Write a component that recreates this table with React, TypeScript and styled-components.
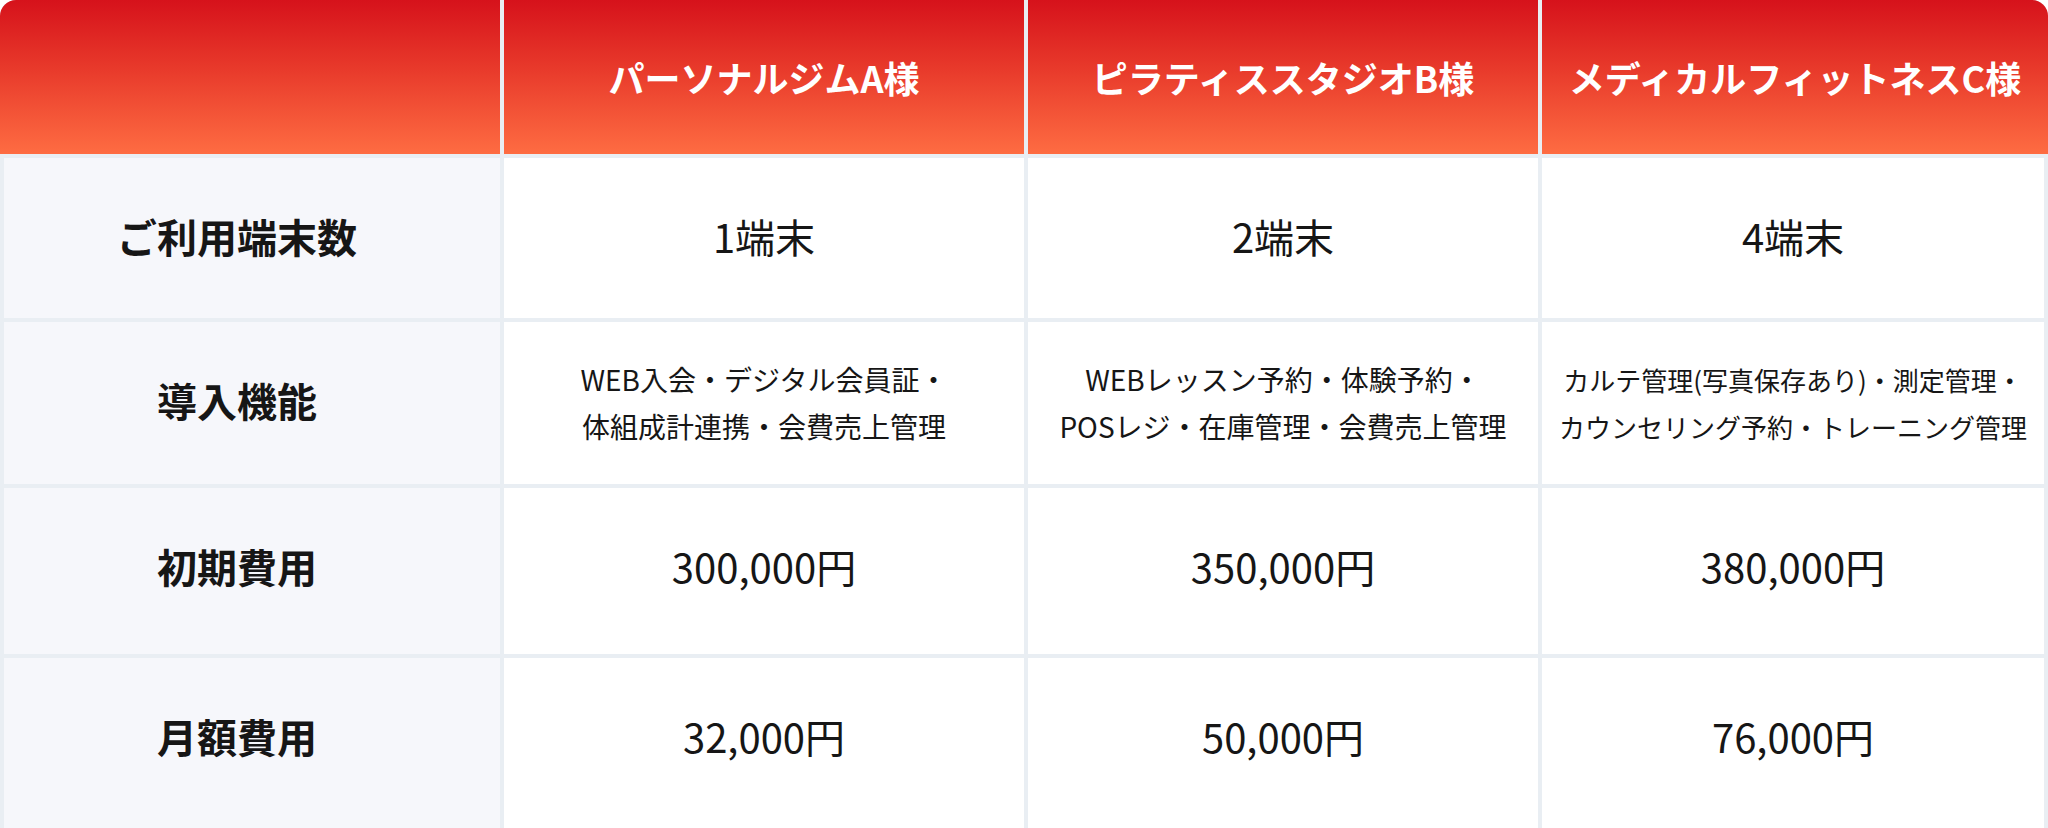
import styled, { createGlobalStyle } from "styled-components";

const GlobalStyle = createGlobalStyle`
  html, body {
    margin: 0;
    padding: 0;
    background: #ffffff;
  }

  body {
    font-family: "Noto Sans CJK JP", "Noto Sans", sans-serif;
    color: #161616;
  }
`;

const Table = styled.div`
  display: flex;
  flex-direction: column;
  gap: 4px;
  width: 2048px;
  background-color: #e9eef3;
  border-radius: 16px 16px 0 0;
  overflow: hidden;
`;

const HeadRow = styled.div`
  display: grid;
  grid-template-columns: 500px 520px 510px 506px;
  gap: 4px;
  height: 154px;
`;

const HeadCell = styled.div`
  display: flex;
  align-items: center;
  justify-content: center;
  background: linear-gradient(180deg, #d6121b 0%, #e83a2b 45%, #fe6c42 100%);
  color: #ffffff;
  font-size: 36px;
  font-weight: 700;
  white-space: nowrap;
`;

const BodyRow = styled.div<{ $height: number }>`
  display: grid;
  grid-template-columns: 496px 520px 510px 502px;
  gap: 4px;
  padding: 0 4px;
  height: ${(p) => p.$height}px;
`;

const Cell = styled.div`
  display: flex;
  justify-content: center;
  align-items: flex-start;
  background-color: #ffffff;
  text-align: center;
  white-space: nowrap;
`;

const Label = styled(Cell)`
  background-color: #f6f7fb;
  font-size: 40px;
  font-weight: 700;
  line-height: 56px;
  padding: 50px 30px 0 0;
`;

const Value = styled(Cell)`
  font-size: 40px;
  font-weight: 400;
  line-height: 56px;
  padding-top: 50px;
`;

const Features = styled(Cell)<{ $small?: boolean }>`
  font-size: ${(p) => (p.$small ? 26 : 28)}px;
  line-height: 47px;
  padding-top: 34px;
`;

const plans = [
  {
    name: "パーソナルジムA様",
    devices: "1端末",
    features: ["WEB入会・デジタル会員証・", "体組成計連携・会費売上管理"],
    initial: "300,000円",
    monthly: "32,000円",
  },
  {
    name: "ピラティススタジオB様",
    devices: "2端末",
    features: ["WEBレッスン予約・体験予約・", "POSレジ・在庫管理・会費売上管理"],
    initial: "350,000円",
    monthly: "50,000円",
  },
  {
    name: "メディカルフィットネスC様",
    devices: "4端末",
    features: ["カルテ管理(写真保存あり)・測定管理・", "カウンセリング予約・トレーニング管理"],
    initial: "380,000円",
    monthly: "76,000円",
  },
];

const App = () => {
  return (
    <>
      <GlobalStyle />
      <Table>
        <HeadRow>
          <HeadCell />
          {plans.map((p) => (
            <HeadCell key={p.name}>{p.name}</HeadCell>
          ))}
        </HeadRow>

        <BodyRow $height={160}>
          <Label>ご利用端末数</Label>
          {plans.map((p) => (
            <Value key={p.name}>{p.devices}</Value>
          ))}
        </BodyRow>

        <BodyRow $height={162}>
          <Label>導入機能</Label>
          {plans.map((p, i) => (
            <Features key={p.name} $small={i === 2}>
              <div>
                {p.features[0]}
                <br />
                {p.features[1]}
              </div>
            </Features>
          ))}
        </BodyRow>

        <BodyRow $height={166}>
          <Label>初期費用</Label>
          {plans.map((p) => (
            <Value key={p.name}>{p.initial}</Value>
          ))}
        </BodyRow>

        <BodyRow $height={174}>
          <Label>月額費用</Label>
          {plans.map((p) => (
            <Value key={p.name}>{p.monthly}</Value>
          ))}
        </BodyRow>
      </Table>
    </>
  );
};

export default App;
